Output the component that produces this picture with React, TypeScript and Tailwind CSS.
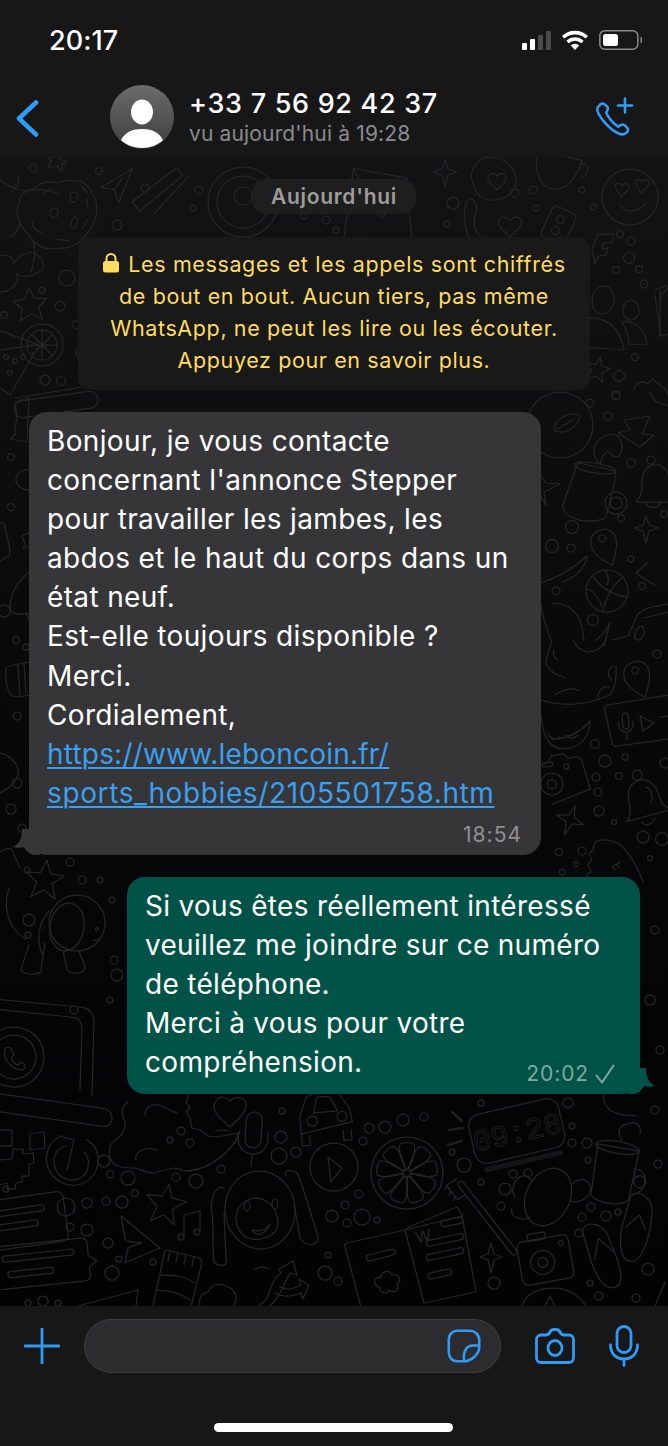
import React from "react";

const font = { fontFamily: '"Inter", "Noto Sans", sans-serif' };

function G({ x, y, r = 0, s = 1, children }: { x: number; y: number; r?: number; s?: number; children: React.ReactNode }) {
  return <g transform={`translate(${x} ${y}) rotate(${r}) scale(${s})`}>{children}</g>;
}

const dots: [number, number, number][] = [
  // bottom band
  [104, 1161, 6], [110, 1174, 3.5], [128, 1178, 7], [176, 1177, 4], [196, 1181, 7], [66, 1207, 9], [87, 1203, 5], [106, 1201, 4], [122, 1202, 6], [135, 1193, 3.5],
  [70, 1227, 4], [87, 1230, 6], [108, 1243, 5], [119, 1259, 3], [153, 1262, 3], [112, 1273, 7], [6, 1189, 3], [43, 1301, 5], [28, 1303, 3], [58, 1303, 3],
  [181, 1131, 4], [170, 1140, 3], [190, 1143, 4], [221, 1169, 4], [281, 1137, 6], [279, 1156, 8], [296, 1152, 5], [282, 1111, 3], [363, 1141, 4], [369, 1128, 5],
  [385, 1127, 6], [403, 1120, 6], [424, 1117, 4], [359, 1194, 4], [345, 1205, 4], [332, 1216, 6], [347, 1223, 4], [362, 1217, 8], [377, 1220, 3], [328, 1255, 3],
  [325, 1273, 7], [338, 1281, 4], [464, 1165, 7], [452, 1152, 3], [481, 1182, 3], [505, 1189, 6], [501, 1206, 4], [513, 1174, 4], [528, 1173, 4], [494, 1283, 6],
  [572, 1143, 4], [587, 1143, 5], [572, 1126, 3], [588, 1160, 3], [568, 1103, 5], [591, 1207, 4], [582, 1217, 4], [606, 1216, 5], [618, 1212, 3], [579, 1233, 4],
  [648, 1269, 6], [590, 1283, 3], [599, 1296, 4], [636, 1298, 4], [658, 1164, 4], [481, 1103, 3],
  // top band
  [33, 168, 4], [67, 278, 8], [42, 290, 3], [60, 306, 5], [4, 315, 3.5], [76, 325, 4], [45, 380, 5], [61, 381, 4.5],
  [99, 171, 3.5], [145, 188, 4], [117, 225, 5], [193, 208, 3], [199, 190, 4], [304, 216, 3], [326, 220, 4], [336, 230, 3], [453, 203, 6], [447, 224, 3], [515, 193, 4], [533, 190, 4], [536, 208, 3], [582, 190, 3], [593, 207, 3],
  [620, 234, 3.5], [631, 241, 4], [629, 258, 5.5], [616, 270, 3.5], [639, 269, 3.5], [644, 284, 4], [635, 357, 3.5], [619, 376, 5.5], [616, 396, 4], [590, 403, 4], [608, 416, 4], [616, 395, 4],
  // right strip
  [631, 463, 4.5], [572, 527, 6.5], [552, 546, 6.5], [571, 548, 4], [621, 518, 3.5], [664, 514, 3.5], [631, 559, 3], [642, 586, 3.5], [593, 620, 5.5], [556, 591, 4],
  [657, 654, 4], [595, 744, 4.5], [605, 761, 6], [625, 757, 3], [596, 777, 4], [619, 776, 3.5], [598, 792, 4], [599, 811, 5], [614, 822, 2.5], [643, 837, 6], [662, 839, 6.5],
  [665, 763, 5], [582, 851, 4], [559, 852, 3.5], [576, 864, 2.5], [562, 872, 3], [650, 858, 2.5],
  // left strip
  [11, 457, 3.5], [11, 507, 3.5], [4, 611, 6], [16, 640, 3.5], [26, 647, 3], [17, 716, 4], [17, 783, 5], [11, 809, 5], [22, 828, 4],
  // mid-left and mid-right
  [70, 862, 4], [82, 880, 4], [27, 870, 3], [29, 920, 6], [28, 935, 3], [114, 960, 4], [117, 975, 6], [110, 1000, 3], [112, 900, 3], [100, 880, 3], [74, 1010, 4],
  [655, 930, 4], [650, 1000, 5], [660, 1050, 4], [655, 1110, 4],
];

function Wallpaper() {
  return (
    <svg className="absolute left-0 top-[-157px]" width="668" height="1446" viewBox="0 0 668 1446" fill="none" stroke="#262629" strokeWidth="1.250" strokeLinecap="round" strokeLinejoin="round">
      {dots.map(([x, y, r], i) => <circle key={i} cx={x} cy={y} r={r} />)}

      {/* top left: cookie, star, cloud, slice, citrus */}
      <G x={60} y={217}>
        <path d="M-26-28c6-8 16-8 22-6 6-2 14-4 20-2 6-1 14 6 16 12 6 8 6 20 2 28-2 8-8 14-14 20-6 6-16 8-26 7-8 2-16-2-22-8-4-8-12-12-13-20-3-6-2-12 0-16 0-6 4-14 15-15z" />
        <ellipse cx="-6" cy="-4" rx="4" ry="5" transform="rotate(20 -6 -4)" /><ellipse cx="14" cy="6" rx="3" ry="6" transform="rotate(15 14 6)" /><ellipse cx="14" cy="-20" rx="4" ry="5" />
        <path d="M-16-22c2-6 8-8 10-4M22 12l6-10M-28 4c0 6 4 10 10 12M-4 22l14 2M22-30l6 6M26-18l2 8" />
      </G>
      <path d="M0 180c8 6 24 14 34 10 10-2 18 2 24 4M18 175c2 10-2 14-6 16" />
      <G x={58} y={162} r={10}><path d="M-2-7l3 4 8 1-5 3 2 8-7-5-8 4 2-8-5-4 8 0z" /></G>
      <path d="M20 222c-2 8-4 12-10 15M30 236c8 12 4 26 1 36" />
      <path d="M1 292c12-1 19-10 15-18 8 4 18 2 27-5 2-8-2-14-13-17-6 1-12 4-16 12 0-6-4-10-14-8" />
      <G x={30} y={303} r={-5}><path d="M0-15l5 11 12 1-9 8 3 12-11-6-11 6 3-12-9-8 12-1z" /></G>
      <G x={42} y={345}><circle r="21" /><circle r="15" /><path d="M0-15V15M-15 0H15M-10-10l20 20M10-10L-10 10" /></G>
      <path d="M-2 330l41 15-29 50-14-10M-2 350l40-5" /><circle cx="6" cy="357" r="2.500" /><circle cx="15" cy="361" r="2.500" /><circle cx="23" cy="357" r="2.500" /><circle cx="10" cy="373" r="2.500" />
      <G x={56} y={404} r={-8}><rect x="-42" y="-8" width="84" height="17" rx="8" /></G>
      <path d="M16 398l78-13" />
      <path d="M78 295l14-20c6-6 16 0 14 8l-10 16c-6 6-14 4-18-4zM84 345a8 8 0 1 0 .1 0zM84 362v14M84 376l10-2" />

      {/* top band */}
      <G x={116} y={182} r={10}><path d="M-14 8l28-24-8 36-6-12-14 0z" /><path d="M0 8l6-14" /></G>
      <G x={155} y={190} r={18}><path d="M-18 18L14-28l8 5-30 48zM6 24l22-48" /></G>
      <G x={243} y={202}><circle r="35" /><circle r="26" /><circle cx="0" cy="-6" r="9" /></G>
      <G x={375} y={205} r={14}><path d="M-30-30L24-34 46 30-22 40z" /><path d="M-30-30L10 12 24-34" /></G>
      <G x={445} y={170}><path d="M0-10l3 9 9 3-9 3-3 12-3-12-9-3 9-3z" /></G>
      <G x={495} y={178}><path d="M-22 6c-6-16 8-30 22-26 14 2 24 14 20 28-4 12-20 18-32 12-6-3-8-8-10-14z" /><path d="M-6 4c-4-6 4-12 8-6 4-6 12 0 8 6l-8 8z" /></G>
      <G x={560} y={168} r={12}><path d="M-26-12h46c-2 20-10 34-24 34s-20-14-22-34zM20-8c8-4 12 8 2 14" /></G>
      <G x={630} y={197}><circle r="28" /><path d="M-14-8c-3-5 4-8 6-3 3-5 9-1 6 4l-7 7zM6-12c-3-5 4-8 6-3 3-5 9-1 6 4l-7 7zM-10 8c6 8 18 8 26-2" /></G>
      <G x={478} y={222} r={-8}><path d="M-6-24c-8 6-10 34-2 44 6 4 10-2 8-6-6-8-4-18 0-26 2-6-2-14-6-12z" /></G>
      <G x={510} y={225}><path d="M0 12l-10-10c-6-8 4-14 10-6 6-8 16-2 10 6z" /></G>
      <G x={560} y={225} r={25}><rect x="-14" y="-16" width="26" height="34" rx="5" /><circle cx="-2" cy="-5" r="4" /><circle cx="-2" cy="7" r="4" /></G>

      {/* top right: people, key, star, hand */}
      <path d="M592 250l6-16 16 0-2 8-8 1-2 6 6-1-2 7-8 1-3 8z" />
      <ellipse cx="603" cy="300" rx="11" ry="14" transform="rotate(10 603 300)" /><ellipse cx="631" cy="310" rx="8" ry="10" />
      <path d="M585 318c18-2 34 6 39 32l-39-3M622 322c12-2 24 8 25 23l-18-1c0-8-3-15-7-22z" />
      <G x={598} y={368} r={12}><path d="M0-11l3 8 9 1-7 6 2 9-7-5-8 5 2-9-6-6 9-1z" /></G>
      <path d="M634 390c2-8 10-10 14-6l4-5 6 4 4 4 4 2 2 6M660 290v46M668 288c-6 6-8 8-8 14" />
      <path d="M650 392c2 8 8 12 14 12l4 2" />
      <path d="M655 290l10-4 3 2M655 296l6 40 7-2" />

      {/* right strip */}
      <G x={560} y={425}><circle r="33" /><path d="M-6 6c0-12 14-20 26-16-2 12-12 20-26 16zM-4 5l16-10" /></G>
      <path d="M624 418l26-4-8 18 12 1-14 12-22-14 12-3z" transform="translate(0 2)" />
      <path d="M600 464c-8-8-8-18-1-24 7-6 16-8 20-2 3 4 4 10 2 14-2 6-8 6-10 2-2-4-6-2-8 2z" />
      <G x={590} y={488}>
        <path d="M-12-25l38 8-2 14-8 32c-2 4-24 6-32 1-6-2-12-6-11-14z" /><ellipse cx="5" cy="-20" rx="21" ry="5" transform="rotate(9 5 -20)" />
        <circle cx="26" cy="15" r="6" /><circle cx="26" cy="15" r="11" />
      </G>
      <G x={651} y={483}><path d="M-15 19c6-6 6-12 6-20 0-14 10-18 14-18s14 6 14 18c0 8 2 14 6 20zM-5 20c2 6 12 6 14 0" /><circle cy="-23" r="4" /></G>
      <path d="M540 475l6 8 14 1-16 8 2 14-6-12" />
      <G x={646} y={528}><path d="M0-12l3 9 9 3-9 3-3 12-3-12-9-3 9-3z" /></G>
      <G x={604} y={543} r={-20}><path d="M0 24c-12-14-15-22-12-30 4-10 20-10 24 0 3 8-2 16-12 30z" /><circle cy="-5" r="3.500" /></G>
      <G x={607} y={591}><circle r="21" /><path d="M-14-14c8 10 20 18 33 20M16-14c-8 6-16 16-20 34M-20-2c6 2 12 8 15 18M-2-20c4 4 4 10 2 14" /></G>
      <path d="M541 583c18-6 32-14 46-27-2 14-14 22-24 26" />
      <path d="M648 562l-12 11 20 13M668 604c-14 2-24 4-30 10l-10 22-16 4" />
      <path d="M640 640c-8 0-6-6-2-12 4-4 4-2 6 2 2 4-2 8-4 10zM668 612l-24 6" />
      <path d="M541 604c0 10 6 24 10 36M552 604c14-2 28 8 30 24l2 12" />
      <path d="M596 640c8-6 12-12 14-18l-6 24" />
      <path d="M552 640c-2 8-6 16-6 24 4 8 12 12 20 14M573 640c4 8 8 10 14 12 8 0 14-4 18-10" />
      <path d="M541 700c24 8 52 4 70-6 4-8 6-18 5-28M555 695c8-6 18-8 24-4M598 698c0-8 6-14 12-10M612 680c-6-4-4-12 2-14M558 660c-4-2-6-6-4-10" />
      <G x={637} y={675} r={-20}><path d="M0 24c-12-14-15-22-12-30 4-10 20-10 24 0 3 8-2 16-12 30z" /><circle cy="-5" r="3.500" /></G>
      <path d="M668 695l-60 10c-4 1-4 2-3 6l7 32c1 3 3 4 6 3l50-7" />
      <G x={626} y={726} r={-5}><rect x="-3" y="-13" width="6" height="16" rx="3" /><path d="M-7-4c-1 8 4 10 7 10s8-2 7-10M0 6v8" /></G>
      <path d="M640 716l14 7-11 8zM660 717l8-1" />
      <path d="M541 716c2 16 4 20 8 26 10 12 30 6 36-4 6-8 4-14 5-17-12 14-26 18-38 18M548 733c2 6 8 8 12 4M566 735c4 4 8 4 12 0" />
      <G x={559} y={784} r={-9}><path d="M-22-20l14-3 5-6 12 0 4 5 8 0c3 0 4 1 5 4l4 30-40 9" /><circle cx="-7" cy="-1" r="11" /><circle cx="-7" cy="-1" r="4.500" /><rect x="-14" y="-23" width="11" height="4" rx="2" /><circle cx="10" cy="-16" r="2.500" /></G>
      <G x={641} y={797} r={-15}><path d="M-20 20c8-6 6-16 8-24 2-12 18-18 26-6 6 6 2 18 6 24l6 6zM-6 24c2 6 10 6 14 0" /><circle cx="2" cy="-22" r="5" /><path d="M7-8c4 0 6 12 1 16" /></G>
      <G x={570} y={820} r={20}><path d="M0-15l3 11 11 4-11 3-3 13-3-13-11-3 11-4z" /></G>
      <path d="M595 842c8-4 16-2 24 2 10 8 18 22 24 38M616 870l-4-3 4-3M620 862l-4 3 4 3M595 842l-2 8-4 4 3 6-4 4 3 8-4 2 2 8" />

      {/* left strip */}
      <path d="M15 402l14-4-2 44-16-3 4-5 0-6 2-10z" />
      <path d="M30 470c-8-2-14 4-14 10s6 10 14 10" />
      <path d="M0 523l4 0 5 22 1 10-10 6" />
      <path d="M30 532l-8 4 3 8-2 4 7-2" />
      <path d="M30 572c-12 8-20 22-20 35 0 6 6 9 20 6M26 613l4 8" />
      <path d="M30 662c-12 2-24 4-24 6-1 8 0 22 6 28 6 2 14 0 18-1M18 665l2 30M24 664l2 30" />
      <path d="M0 753c10 2 20 12 18 22-2 8-10 14-18 18" />
      <path d="M0 852c6-4 10-4 12-2l8 18" />

      {/* dog + star */}
      <G x={45} y={878} r={6}><path d="M0-18l5 13 14 1-11 9 4 15-12-8-12 8 4-15-11-9 14-1z" /></G>
      <G x={65} y={925}>
        <path d="M-22 30c-8-16-4-32 6-44" /><ellipse cx="12" cy="-2" rx="28" ry="28" />
        <ellipse cx="2" cy="2" rx="17" ry="24" transform="rotate(10 2 2)" />
        <path d="M-40 14c-22-14-20-40-16-50M-20 18l-4 26c4 6-18 8-20 0l8-24M14 26l6 16c0 8-16 8-18 2l-4-18" /><circle cx="32" cy="4" r="1.500" /><path d="M34 14l-6 2" />
      </G>

      {/* laptop */}
      <G x={0} y={1035}>
        <path d="M-6-36L80-28c8 0 14 6 14 14L92 60" /><path d="M-6-26L70-18c8 0 12 4 12 12L80 55" />
        <circle cx="14" cy="22" r="30" /><circle cx="14" cy="22" r="22" /><path d="M5 14c-3 10 6 20 16 21 3 0 5-3 4-5l-4-3-3 3c-3-1-6-4-7-8l3-2-3-7c-3-1-5-1-6 1z" />
        <path d="M-6 58l100 14c12 2 18 2 18 12-2 8-6 8-12 7L-6 76" />
      </G>

      {/* cloud + moustache moon */}
      <path d="M128 1102c-8 6-6 12-4 18 4 6-2 14-6 18-8 4-10 12-8 20 4 10 14 10 26 10 6 2 10 5 18 5 20-6 22-6 30-2 20 0 38-12 52-30l2-8-22 4-8-1-8-6-8-2-2-10-4-6 4-4-4-6 2-4 2-10" />
      <path d="M145 1115c0-6 6-12 14-10l18 8M136 1160c-2-8 8-14 22-10" />
      <path d="M228 1131c-4-1-8-2-12 0" />
      {/* pixels */}
      <path d="M-2 1130h14v16H-2zM30 1134l14-2 1 16-15 2zM0 1160l12-1 1-10 10 0 0 5 10-1 1 10-5 1 0 12-7 0 0 6-6 1-1 6-8 0 0-6-7 2" />
      {/* refresh */}
      <path d="M62 1136c-6 2-12 6-14 14-4 12 0 24 12 32 12 6 26 4 34-8 6-10 6-22-2-30-2-2-4-4-6-4M60 1136l14 4-7 30M66 1146c-8 2-12 8-12 16 0 10 8 18 18 18 8 0 16-6 16-14 2-6-2-12-4-14" />
      {/* speech */}
      <G x={20} y={1221} r={-8}><rect x="-36" y="-24" width="82" height="50" rx="6" /><rect x="-28" y="-13" width="54" height="6" rx="3" /><rect x="-28" y="1" width="46" height="6" rx="3" /></G>
      <G x={45} y={1265} r={-6}>
        <path d="M-46-23h84c4 0 6 2 6 6v12l8 6-8 6v8c0 3-2 5-6 5h-84" />
        <rect x="-42" y="-13" width="72" height="6" rx="3" /><rect x="-38" y="3" width="46" height="6" rx="3" />
      </G>
      <G x={166} y={1202} r={10}><path d="M0-18l5 13 15 1-12 10 4 15-12-8-12 8 4-15-12-10 15-1z" /></G>
      <G x={135} y={1238} r={35}><path d="M-24-10l50 4-20 32-6-14 8-12-14 8z" /></G>
      <G x={192} y={1225}><path d="M-8 12v-22l16-4v20" /><circle cx="-11" cy="12" r="3" /><circle cx="5" cy="7" r="3" /></G>
      <path d="M167 1250l32 8c3 2 3 4 2 8l-10 40M153 1306l12-56M170 1252l-2 9M178 1252l-2 10M186 1254l-2 10M194 1256l-2 10M160 1275c12 0 24 0 34 8M156 1290c12 0 24 2 34 10" />
      <path d="M78 1306l60-16-2 16" />
      <path d="M200 1306c-2-8 2-14 8-14 2-6 10-10 18-6 6 2 12 8 10 14l-2 6" />
      {/* mic, heart, car */}
      <G x={253} y={1140} r={4}><rect x="-8" y="-28" width="16" height="36" rx="8" /><path d="M-14-8c-4 16 6 22 14 22s18-6 14-22M0 14v12" /></G>
      <G x={230} y={1107}><path d="M0 20c-12-10-20-18-14-26 4-6 10-4 14 0 6-6 14-4 16 2 2 8-8 16-16 24z" /></G>
      <G x={324} y={1118} r={-5}>
        <path d="M-24 14V-4l8-18c8-6 26-6 32-2l10 16 2 14zM-24 14v12h8V16M26 14v10h-8v-10M-10-6h24l-6-14c-6-2-12-2-14 0z" /><circle cx="-12" cy="2" r="5" /><circle cx="18" cy="0" r="5" />
      </G>
      {/* play */}
      <G x={334} y={1167}><ellipse rx="24" ry="24" /><path d="M-6-10l14 11-11 14z" /></G>
      {/* orange */}
      <G x={407} y={1173}>
        <circle r="36" />
        {[0, 40, 80, 120, 160, 200, 240, 280, 320].map((a) => (
          <path key={a} transform={`rotate(${a})`} d="M0-3c-6-8-9-20-7-26 3-2 11-2 14 0 2 6-1 18-7 26z" />
        ))}
      </G>
      {/* clock */}
      <G x={517} y={1132} r={-13}>
        <rect x="-46" y="-26" width="92" height="50" rx="12" />
        <path d="M-38 30h76" strokeWidth="5" opacity="0.5" />
        <text x="0" y="10" textAnchor="middle" fontSize="30" stroke="#262629" strokeWidth="0.800" strokeDasharray="3 1" fill="none" style={{ fontFamily: '"Liberation Mono", monospace' }}>09:28</text>
      </G>
      <path d="M452 1112l10 9M449 1130l14-2M448 1145l14-4" strokeWidth="2.500" opacity="0.8" />
      {/* cup */}
      <G x={613} y={1173} r={10}><path d="M-20-26h42l-2 48c0 10-34 12-38 2z" /><ellipse cx="0" cy="-26" rx="22" ry="6" /><path d="M20-8c16-2 18 22 2 26" /><circle cx="28" cy="4" r="6" /></G>
      <path d="M622 1140c-6-8-2-16 6-16 8-4 14 2 12 10M636 1116c-6-1-18 0-26-6-8-8-8-16-4-20" />
      {/* croissant */}
      <G x={548} y={1197} r={25}><ellipse rx="22" ry="30" /><path d="M-22-8c-14-8-20 14-8 22M16-22c8-14 20-10 20 2 0 6-8 14-14 14M-8 26c-6 8-18 8-20 0" /></G>
      {/* toothbrush */}
      <G x={485} y={1215} r={-38}><rect x="-3" y="-42" width="6" height="92" rx="3" /><path d="M-3-28l-9-1v-18l12 1M-12-47l-4 3M-12-40l-4 2M-12-33l-4 2" /></G>
      {/* monkey */}
      <G x={260} y={1210}>
        <ellipse rx="35" ry="39" transform="rotate(-6)" />
        <path d="M-12-10c10-6 30 2 30 24 0 12-18 18-30 14-14-6-18-30 0-38z" />
        <ellipse cx="-13" cy="-4" rx="3" ry="5" /><ellipse cx="15" cy="-6" rx="3" ry="5" /><path d="M-8 20c8 2 14 0 18-6-4 10-14 14-18 6z" />
        <path d="M-36-22c-10-4-14 14-12 26 2 14 0 30 2 48 6 6 14 4 12-4l-2-44M26-34c-4-8 8-6 12-2 6 16 14 44 20 62 2 10-12 12-18 2l-6-34" />
      </G>
      {/* arrows */}
      <G x={277} y={1277}>
        <path d="M-18 28c10-4 10-14 14-22 2-6 8-10 8-10l-2-4 14-8 4 14-6-2c-6 6-6 12-10 18-6 12-14 18-18 18zM-22-8c8-4 14 0 14 0M2 10c8 4 14 2 22-2l-2-6 10 6-6 14-2-6c-8 4-20 4-26 0" />
      </G>
      {/* book */}
      <path d="M347 1243l58-13 19 73 52-11-14-76-57 14M347 1243c-2 0-3 2-2 4l16 60M405 1230l4-3 48-20 6 9" />
      <G x={452} y={1222} r={-12}><rect x="-11" y="-3" width="22" height="6" rx="3" /></G>
      <G x={445} y={1240} r={-12}><rect x="-19" y="-3" width="38" height="6" rx="3" /></G>
      <G x={445} y={1254} r={-12}><rect x="-19" y="-3" width="38" height="6" rx="3" /></G>
      <G x={440} y={1274} r={-12}><rect x="-12" y="-3" width="24" height="6" rx="3" /></G>
      <G x={381} y={1255} r={-14}><rect x="-15" y="-3" width="30" height="6" rx="3" /></G>
      <path d="M378 1287c-7-5-2-11 3-9 0-7 8-9 11-3 7-2 10 6 5 9 3 6-3 10-8 6-2 5-10 3-9-3z" />
      <text x="417" y="1243" fontSize="16" fill="#262629" stroke="none" transform="rotate(-12 417 1243)" style={{ fontFamily: '"Liberation Sans", sans-serif' }}>W</text>
      <G x={491} y={1257}><path d="M0-14l3 11 8 3-8 3-3 13-3-13-8-3 8-3z" /></G>
      {/* camera */}
      <G x={545} y={1258} r={-10}><rect x="-26" y="-20" width="52" height="44" rx="6" /><rect x="-14" y="-26" width="18" height="7" rx="2" /><circle cx="-3" cy="4" r="12" /><circle cx="-3" cy="4" r="5" /><circle cx="18" cy="-12" r="2.500" /></G>
      {/* flip flops */}
      <G x={603} y={1260} r={-12}><path d="M-14-30c0-14 22-8 24 8 4 20 8 44 0 50-14 6-20-12-22-30zM-8-2c4-10 6-16 8-20l12 16" /></G>
      <G x={639} y={1233} r={8}><path d="M-14-30c0-14 22-12 24 8 2 20-2 44-10 50-14 6-18-12-18-30zM-14-4l12-14 8 14" /></G>
      <path d="M522 1306c4-12 14-18 32-18 14 0 26 8 32 18M545 1306l5-10 5 10M655 1306l10-24" />
    </svg>
  );
}

function Signal() {
  return (
    <svg width="30" height="20" viewBox="0 0 30 20">
      <rect x="1" y="13" width="5" height="7" rx="1" fill="#fff" />
      <rect x="9" y="9" width="5" height="11" rx="1" fill="#fff" />
      <rect x="17" y="5" width="5" height="15" rx="1" fill="#4b4b4b" />
      <rect x="25" y="1" width="5" height="19" rx="1" fill="#4b4b4b" />
    </svg>
  );
}

function Wifi() {
  return (
    <svg width="28" height="20" viewBox="0 0 28 20" fill="#fff">
      <path d="M14 20l-4.200-4.500a6 6 0 0 1 8.400 0z" />
      <path d="M7.700 13.200L5.400 10.700a12.500 12.500 0 0 1 17.200 0l-2.300 2.500a9 9 0 0 0-12.600 0z" />
      <path d="M3.400 8.600L1 6a19 19 0 0 1 26 0l-2.400 2.600a15.600 15.600 0 0 0-21.200 0z" />
    </svg>
  );
}

function Battery() {
  return (
    <svg width="44" height="20" viewBox="0 0 44 20" fill="none">
      <rect x="0.800" y="0.800" width="38" height="18.400" rx="5" stroke="#8a8a8a" strokeWidth="1.500" />
      <rect x="4" y="4" width="15" height="12" rx="2.500" fill="#fff" />
      <path d="M41.500 6.500c2 .8 2 6.200 0 7z" fill="#8a8a8a" />
    </svg>
  );
}

function Avatar() {
  return (
    <div className="w-[64px] h-[64px] rounded-full overflow-hidden bg-linear-to-b from-[#6b6b6b] to-[#3f3f3f] shrink-0">
      <svg width="64" height="64" viewBox="0 0 64 64" fill="#fff">
        <ellipse cx="32" cy="27" rx="11" ry="12.500" />
        <path d="M11 55c4-8 12-11 21-11s17 3 21 11c-5 5-13 8-21 8s-16-3-21-8z" />
      </svg>
    </div>
  );
}

const blue = "#2f9bf7";

export default function App() {
  return (
    <div style={font} className="w-[668px] h-[1446px] flex flex-col overflow-hidden bg-[#171717] text-white">
      {/* header */}
      <header className="h-[157px] shrink-0 flex flex-col bg-[#171717] relative z-10">
        <div className="h-[80px] flex items-center pl-[49px] pr-[25px] justify-between">
          <span className="text-[27px] font-medium tracking-[0.1px] leading-none">20:17</span>
          <div className="flex items-center gap-[10px]">
            <Signal />
            <Wifi />
            <Battery />
          </div>
        </div>
        <div className="flex-1 flex items-start pt-[5px] pl-[16px] pr-[33px]">
          <svg className="mt-[15px] shrink-0" width="23" height="37" viewBox="0 0 23 37" fill="none" stroke={blue} strokeWidth="4.500" strokeLinecap="round" strokeLinejoin="round">
            <path d="M20 2.500L3 18.500l17 16" />
          </svg>
          <div className="ml-[71px]"><Avatar /></div>
          <div className="ml-[15px] flex flex-col flex-1">
            <span className="text-[27px] font-medium leading-[34px] mt-[2px] tracking-[0.7px]">+33 7 56 92 42 37</span>
            <span className="text-[21px] leading-[26px] tracking-[0.15px] text-[#8a8a8e]">vu aujourd'hui à 19:28</span>
          </div>
          <svg className="mt-[12px] shrink-0" width="40" height="40" viewBox="0 0 40 40" fill="none" stroke={blue} strokeWidth="2.600" strokeLinecap="round" strokeLinejoin="round">
            <path d="M4.500 8.500c1-1.500 3-2.500 4.500-1.500l2.600 2c1.300 1 1.500 2.500 1 4l-1.400 2.700c2 4.500 6 10 12 14l3-1.800c1.300-.7 3-.3 4 .8l2 2.300c1.200 1.300 1 3.300-.5 4.500-2 1.800-5 2.500-8 1C13 32 4 19 2.500 14c-.5-2-.2-4 2-5.500z" />
            <path d="M30 1.500v14M23 8.500h14" />
          </svg>
        </div>
      </header>

      {/* chat */}
      <main className="relative flex-1 overflow-hidden bg-linear-to-b from-[#131316] via-[#08080a] to-[#030304]">
        <Wallpaper />
        <div className="relative flex flex-col items-center pt-[22px]">
          <div className="w-[164px] h-[35px] rounded-[14px] bg-[#1e1e1e] flex items-center justify-center text-[21px] font-semibold tracking-[0.7px] text-[#9c9c9c]">
            Aujourd'hui
          </div>
          <div className="mt-[23px] w-[512px] h-[153px] pb-[4px] rounded-[12px] bg-[#1b1b1b]/85 flex flex-col justify-center items-center text-center text-[21.500px] tracking-[0.62px] leading-[32px] text-[#fedc5f] whitespace-nowrap">
            <div className="flex items-center gap-[8px]">
              <svg width="18" height="20" viewBox="0 0 18 20" fill="#fedc5f" className="mt-[-2px]">
                <rect x="1" y="8" width="16" height="11.500" rx="2.500" />
                <path d="M4.500 9V5.500a4.500 4.500 0 0 1 9 0V9" fill="none" stroke="#fedc5f" strokeWidth="2" />
              </svg>
              <span>Les messages et les appels sont chiffrés</span>
            </div>
            <div>de bout en bout. Aucun tiers, pas même</div>
            <div>WhatsApp, ne peut les lire ou les écouter.</div>
            <div>Appuyez pour en savoir plus.</div>
          </div>

          {/* incoming */}
          <div className="relative self-start ml-[29px] mt-[22px] w-[512px] h-[443px] rounded-[18px] bg-[#363638] pl-[18px] pt-[10px] text-[28px] tracking-[0.35px] leading-[39.100px] whitespace-nowrap">
            <svg className="absolute left-[-19px] bottom-[0px]" width="34" height="26" viewBox="0 0 34 26" fill="#363638"><path d="M30 0v26h-6c-6-1-8-5-10-8-3 1-8 1-11 0 6-3 9-8 9-18z" /></svg>
            <div className="relative">Bonjour, je vous contacte</div>
            <div className="relative">concernant l'annonce Stepper</div>
            <div className="relative">pour travailler les jambes, les</div>
            <div className="relative">abdos et le haut du corps dans un</div>
            <div className="relative">état neuf.</div>
            <div className="relative">Est-elle toujours disponible ?</div>
            <div className="relative">Merci.</div>
            <div className="relative">Cordialement,</div>
            <div className="relative tracking-[0.2px] text-[#3b9ff0] underline decoration-[2px] underline-offset-[3px]">https://www.leboncoin.fr/</div>
            <div className="relative tracking-[0.62px] text-[#3b9ff0] underline decoration-[2px] underline-offset-[3px]">sports_hobbies/2105501758.htm</div>
            <div className="absolute right-[19px] bottom-[7px] text-[21px] tracking-[1px] leading-[26px] text-[#8e8e92]">18:54</div>
          </div>

          {/* outgoing */}
          <div className="relative self-start ml-[127px] mt-[22px] w-[513px] h-[217px] rounded-[18px] bg-[#005346] pl-[18px] pt-[10px] text-[28px] tracking-[0.3px] leading-[39.100px] whitespace-nowrap">
            <svg className="absolute right-[-18px] bottom-[0px]" width="34" height="26" viewBox="0 0 34 26" fill="#005346"><path d="M4 0v26h6c6-1 8-5 10-8 3 1 8 1 11 0-6-3-9-8-9-18z" /></svg>
            <div className="relative">Si vous êtes réellement intéressé</div>
            <div className="relative">veuillez me joindre sur ce numéro</div>
            <div className="relative">de téléphone.</div>
            <div className="relative">Merci à vous pour votre</div>
            <div className="relative">compréhension.</div>
            <div className="absolute right-[25px] bottom-[7px] flex items-center gap-[6px] text-[21px] tracking-[0.9px] leading-[26px] text-[#7ea89f]">
              <span>20:02</span>
              <svg width="20" height="20" viewBox="0 0 20 20" fill="none" stroke="#7ea89f" strokeWidth="2" strokeLinecap="round" strokeLinejoin="round"><path d="M1.500 11.500l5.500 7L18.500 1.500" /></svg>
            </div>
          </div>
        </div>
      </main>

      {/* composer */}
      <footer className="h-[140px] shrink-0 bg-[#171717] flex flex-col items-center pt-[13px]">
        <div className="w-full flex items-center pl-[24px]">
          <svg width="36" height="36" viewBox="0 0 36 36" fill="none" stroke={blue} strokeWidth="2.800" strokeLinecap="round" className="shrink-0"><path d="M18 1v34M1 18h34" /></svg>
          <div className="ml-[24px] w-[417px] h-[54px] rounded-[27px] bg-[#2c2c2e] border border-[#3e3e40] flex items-center justify-end pr-[19px]">
            <svg width="34" height="34" viewBox="0 0 34 34" fill="none" stroke={blue} strokeWidth="2.600" strokeLinecap="round" strokeLinejoin="round">
              <path d="M10 1.800h13c5 0 9.200 4 9.200 9.200v7.500C32.200 25 24 32.200 18 32.200h-8c-5 0-8.200-4-8.200-8.700V10C1.800 5.500 5.500 1.800 10 1.800z" />
              <path d="M32 16.500h-6c-6 0-10 5-9 15.500" />
            </svg>
          </div>
          <svg width="40" height="36" viewBox="0 0 40 36" fill="none" stroke={blue} strokeWidth="2.800" strokeLinecap="round" strokeLinejoin="round" className="ml-[34px] shrink-0">
            <path d="M6 7h5c2 0 3-1 4-3 .8-1.600 2-2.500 4-2.500h2c2 0 3.200 .9 4 2.500 1 2 2 3 4 3h5c2.500 0 4.500 2 4.500 4.500V30c0 2.500-2 4.500-4.500 4.500H6c-2.500 0-4.500-2-4.500-4.500V11.500C1.500 9 3.500 7 6 7z" />
            <ellipse cx="20" cy="20" rx="7" ry="7.500" />
          </svg>
          <svg width="30" height="42" viewBox="0 0 30 42" fill="none" stroke={blue} strokeWidth="2.800" strokeLinecap="round" strokeLinejoin="round" className="ml-[34px] shrink-0">
            <rect x="8" y="1.500" width="14" height="26" rx="7" />
            <path d="M1.500 20c0 9 6 14 13.500 14s13.500-5 13.500-14M15 34v6.500" />
          </svg>
        </div>
        <div className="mt-[50px] w-[239px] h-[9px] rounded-full bg-white mr-[1px]" />
      </footer>
    </div>
  );
}
